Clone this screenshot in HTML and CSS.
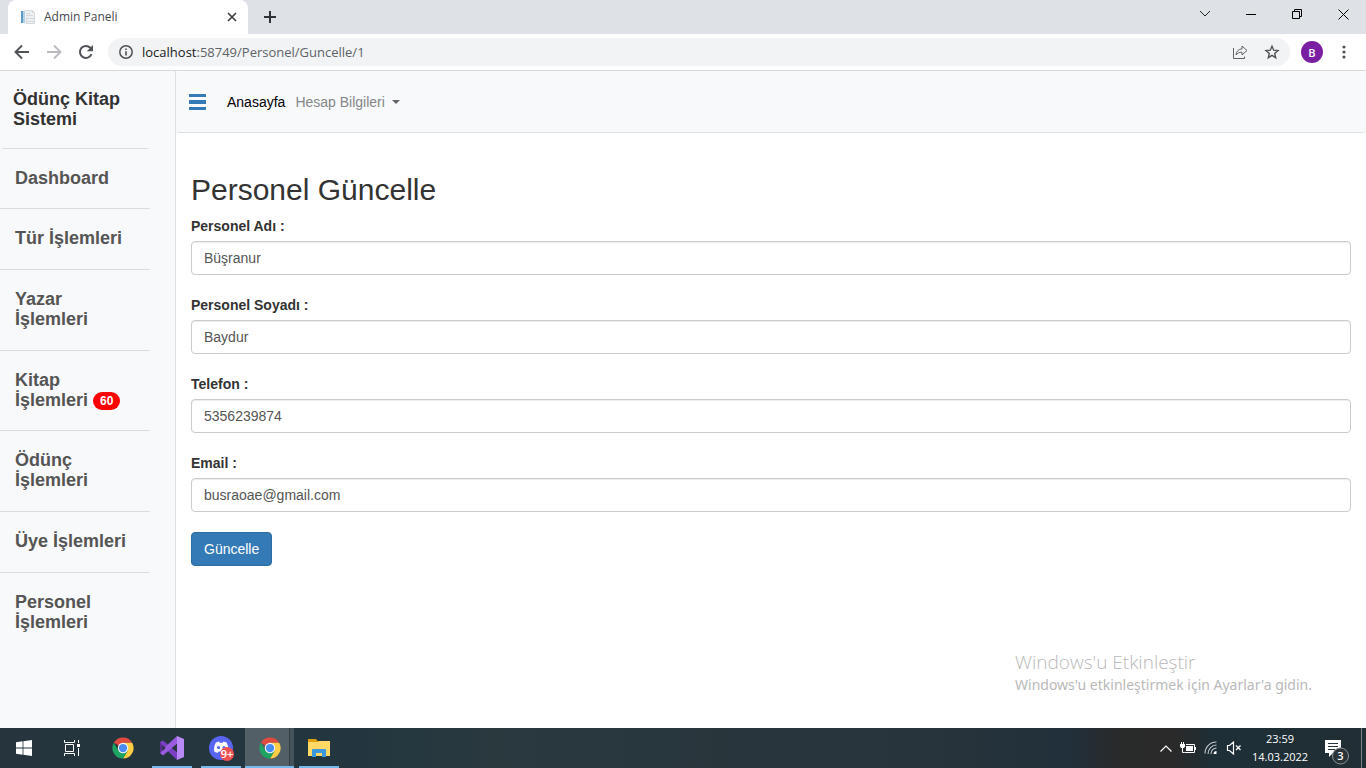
FILE: index.html
```html
<!DOCTYPE html>
<html lang="tr">
<head>
<meta charset="utf-8">
<title>Admin Paneli</title>
<link rel="stylesheet" href="styles.css">
</head>
<body>
<svg class="defs" aria-hidden="true">
  <symbol id="chrome" viewBox="0 0 48 48">
    <path fill="#e04a3f" d="M24 24 4 12.500A23 23 0 0 1 44 12.500H24z"/>
    <path fill="#ffcd46" d="M24 12.500H44A23 23 0 0 1 24 47L34 30z"/>
    <path fill="#1da462" d="M4 12.500 14 30 34 30 24 47A23 23 0 0 1 4 12.500z"/>
    <circle cx="24" cy="24" r="11.500" fill="#f3f6f8"/>
    <circle cx="24" cy="24" r="9" fill="#4a8af4"/>
  </symbol>
</svg>

<header class="browser">
  <div class="tabstrip">
    <div class="tab">
      <svg class="favicon" width="16" height="16" viewBox="0 0 16 16"><path fill="#eef1f3" d="M4 1h8l3 3v11H4z"/><path fill="#d5d9dc" d="M12 1v3h3zM6 4h4v1H6zM6 6h7v1H6zM7 9h7v1H7zM7 12h7v1H7z"/><path fill="#5b9bc9" d="M1 2h2v12H1z"/><path fill="#b6d3e6" d="M3 2h2v12H3z"/><path fill="none" stroke="#d5d9dc" d="M5 1.500h7l2.500 3v10H6.500v-6"/></svg>
      <span class="tab-title">Admin Paneli</span>
      <button class="tab-close" aria-label="Sekmeyi kapat"><svg width="10" height="10" viewBox="0 0 10 10"><path d="M1 1l8 8M9 1L1 9" stroke="#3c4043" stroke-width="1.700"/></svg></button>
    </div>
    <button class="new-tab" aria-label="Yeni sekme"><svg width="12" height="12" viewBox="0 0 12 12"><path d="M6 0v12M0 6h12" stroke="#303337" stroke-width="2"/></svg></button>
    <div class="window-controls">
      <button aria-label="Sekme ara"><svg width="12" height="8" viewBox="0 0 12 8"><path d="M1 1l5 5 5-5" fill="none" stroke="#222"/></svg></button>
      <button aria-label="Küçült"><svg width="10" height="10" viewBox="0 0 10 10"><path d="M0 5.500h10" stroke="#000"/></svg></button>
      <button aria-label="Önceki boyut"><svg width="10" height="10" viewBox="0 0 10 10"><path d="M.5 2.500h7v7h-7zM2.500 2.500v-2h7v7h-2" fill="none" stroke="#000"/></svg></button>
      <button aria-label="Kapat"><svg width="11" height="11" viewBox="0 0 11 11"><path d="M.5.5l10 10M10.500.5l-10 10" stroke="#000"/></svg></button>
    </div>
  </div>
  <div class="toolbar">
    <button class="tool" aria-label="Geri"><svg width="16" height="16" viewBox="0 0 16 16"><path d="M15 8H2M8 1.500L1.500 8 8 14.500" fill="none" stroke="#505357" stroke-width="1.900"/></svg></button>
    <button class="tool" aria-label="İleri"><svg width="16" height="16" viewBox="0 0 16 16"><path d="M1 8h13M8 1.500L14.500 8 8 14.500" fill="none" stroke="#b9bbbe" stroke-width="1.900"/></svg></button>
    <button class="tool" aria-label="Yenile"><svg width="16" height="16" viewBox="0 0 16 16"><path d="M13.500 10.200A6 6 0 1 1 12.300 3.800L14 5.500" fill="none" stroke="#505357" stroke-width="2"/><path d="M15 1v6.200H8.800z" fill="#505357"/></svg></button>
    <div class="omnibox">
      <svg width="14" height="14" viewBox="0 0 14 14"><circle cx="7" cy="7" r="6.200" fill="none" stroke="#4f5256" stroke-width="1.500"/><path d="M6.200 6.200h1.600v4.300H6.200zM6.200 3.400h1.600V5H6.200z" fill="#4f5256"/></svg>
      <span class="url"><b>localhost</b>:58749/Personel/Guncelle/1</span>
      <button class="tool" aria-label="Paylaş"><svg width="16" height="16" viewBox="0 0 16 16"><path d="M1.500 4v10.500h11v-2" fill="none" stroke="#606367"/><path d="M4 11C4.200 7.500 6.500 5 10 4.900V2L15 6.500 10 11V8.200C7.200 8.200 5.500 9 4 11z" fill="none" stroke="#606367"/></svg></button>
      <button class="tool" aria-label="Yer işareti"><svg width="16" height="16" viewBox="0 0 16 16"><path d="M8 2.200l1.700 4 4.300.3-3.300 2.900 1 4.300L8 11.400l-3.700 2.300 1-4.300L2 6.500l4.300-.3z" fill="none" stroke="#505357" stroke-width="1.400"/></svg></button>
    </div>
    <button class="avatar">B</button>
    <button class="tool menu" aria-label="Menü"><svg width="4" height="14" viewBox="0 0 4 14"><g fill="#505357"><circle cx="2" cy="2" r="1.600"/><circle cx="2" cy="7" r="1.600"/><circle cx="2" cy="12" r="1.600"/></g></svg></button>
  </div>
</header>

<div class="page">
  <aside class="sidebar">
    <h4 class="brand">Ödünç Kitap Sistemi</h4>
    <nav class="side-list">
      <a href="#">Dashboard</a>
      <a href="#">Tür İşlemleri</a>
      <a href="#">Yazar İşlemleri</a>
      <a href="#">Kitap İşlemleri <span class="badge">60</span></a>
      <a href="#">Ödünç İşlemleri</a>
      <a href="#">Üye İşlemleri</a>
      <a href="#">Personel İşlemleri</a>
    </nav>
  </aside>
  <main class="main">
    <nav class="navbar">
      <button class="toggle" aria-label="Menüyü aç"><svg width="17" height="16" viewBox="0 0 17 16"><path d="M0 0h17v3H0zM0 6h17v4H0zM0 13h17v3H0z" fill="#337ab7"/></svg></button>
      <a class="current" href="#">Anasayfa</a>
      <a class="dropdown" href="#">Hesap Bilgileri <span class="caret"></span></a>
    </nav>
    <form class="content">
      <h2>Personel Güncelle</h2>
      <div class="field"><label for="ad">Personel Adı :</label><input id="ad" type="text" value="Büşranur"></div>
      <div class="field"><label for="soyad">Personel Soyadı :</label><input id="soyad" type="text" value="Baydur"></div>
      <div class="field"><label for="tel">Telefon :</label><input id="tel" type="text" value="5356239874"></div>
      <div class="field"><label for="email">Email :</label><input id="email" type="text" value="busraoae@gmail.com"></div>
      <button class="btn" type="button">Güncelle</button>
    </form>
  </main>
  <div class="activation"><strong>Windows'u Etkinleştir</strong><span>Windows'u etkinleştirmek için Ayarlar'a gidin.</span></div>
</div>

<footer class="taskbar">
  <div class="system">
    <button aria-label="Başlat"><svg width="16" height="16" viewBox="0 0 16 16"><path fill="#fff" d="M0 2.200L6.600 1.300V7.600H0zM7.400 1.200L16 0v7.600H7.400zM0 8.400h6.600v6.300L0 13.800zM7.400 8.400H16V16l-8.600-1.200z"/></svg></button>
    <button aria-label="Görev görünümü"><svg width="16" height="16" viewBox="0 0 16 16"><path d="M.5 0v2.500h10V0M.5 16v-2.500h10V16M1.500 4.500h8v7h-8zM14.500 0v3M14.500 8v8" fill="none" stroke="#fff"/><path fill="#fff" d="M13 4h3v3h-3z"/></svg></button>
  </div>
  <div class="apps">
    <button aria-label="Chrome"><svg width="22" height="22"><use href="#chrome"/></svg></button>
    <button class="open" aria-label="Visual Studio"><svg width="24" height="24" viewBox="0 0 24 24"><path fill="#7b3fc4" d="M0 6l3-1.500L18 17l-1 7L3 10.500v4L0 17z"/><path fill="#9a5be0" d="M0 17l3 2.500L18 7l-1-7L3 13z"/><path fill="#b98af5" d="M17 0l7 3v18l-7 3z"/><path fill="#5c2d91" d="M0 6l3 4.500v3L0 17z"/><path fill="#26353c" d="M17 8v8l-5-4zM2.500 9v6l3-3z"/></svg></button>
    <button class="open" aria-label="Discord"><svg width="24" height="26" viewBox="0 0 24 26"><circle cx="12" cy="13" r="12" fill="#5865f2"/><path fill="#fff" d="M5 16c0-4 .8-7 2-8.500l3-1 .7 1.200h3l.8-1.200 3 1c1.300 2 2 5 2 8.500-1 1-2 1.500-3.500 2l-1-1.500H9.500L8.500 18C7 17.500 6 17 5 16z"/><circle cx="9.500" cy="12.500" r="1.600" fill="#5865f2"/><circle cx="15" cy="12.500" r="1.600" fill="#5865f2"/></svg><svg class="discord-badge" width="14" height="14" viewBox="0 0 14 14"><circle cx="7" cy="7" r="7" fill="#ef5052"/><text x="7" y="11" text-anchor="middle" class="count">9+</text></svg></button>
    <button class="open active" aria-label="Chrome, Admin Paneli"><svg width="22" height="22"><use href="#chrome"/></svg></button>
    <button class="open" aria-label="Dosya Gezgini"><svg width="22" height="18" viewBox="0 0 22 18"><path fill="#e0a010" d="M0 0h8l1.500 2H22v3H0z"/><path fill="#ffd866" d="M0 3h10l1-1h11v15H0z"/><path fill="#3c97dd" d="M4 18v-7q0-1 1-1h12q1 0 1 1v7h-4v-4H8v4z"/></svg></button>
  </div>
  <div class="tray">
    <svg width="12" height="7" viewBox="0 0 12 7"><path d="M.5 6.500L6 1l5.500 5.500" fill="none" stroke="#fff" stroke-width="1.200"/></svg>
    <svg width="16" height="12" viewBox="0 0 16 12"><path d="M6 2.500h8.500v8h-10M1.500 0v2M3.500 0v2M2.500 5v5.500h2" fill="none" stroke="#fff"/><path fill="#fff" d="M0 2h5v2.500L4 6H1L0 4.500zM6 4h7v5H6zM15 5h1v3h-1z"/></svg>
    <svg width="14" height="14" viewBox="0 0 14 14"><path d="M1 12.500C1 6 6 1 12.500 1M4 13C4 8 8 4 12.500 4M7 13c0-3.500 2.500-6 5.500-6" fill="none" stroke="#c2c9cc" stroke-width="1.100"/><path d="M9.500 13c0-2 1.500-3 3-3v3z" fill="#fff"/></svg>
    <svg width="16" height="14" viewBox="0 0 16 14"><path d="M1.500 4.500h2l4-3.500v12l-4-3.500h-2zM10 4.500l4.500 4.500M14.500 4.500L10 9" fill="none" stroke="#fff" stroke-width="1.200"/></svg>
  </div>
  <div class="clock"><time>23:59</time><time>14.03.2022</time></div>
  <button class="notices" aria-label="Bildirimler"><svg width="26" height="26" viewBox="0 0 26 26"><path fill="#fff" d="M0 1h16v13H8l-4 4v-4H0z"/><path d="M3 4.500h10M3 7.500h10M3 10.500h7" stroke="#26343b"/><circle cx="15.500" cy="17" r="8" fill="#2b3337" stroke="#899196"/><text x="15.500" y="21" text-anchor="middle" class="count">3</text></svg></button>
</footer>
</body>
</html>
```

FILE: styles.css
```css
* { box-sizing: border-box; }

body {
  margin: 0;
  min-height: 100vh;
  display: flex;
  flex-direction: column;
  font: 14px/20px "Liberation Sans", Arial, sans-serif;
  color: #333;
  background: #fff;
}

button {
  display: flex;
  align-items: center;
  justify-content: center;
  padding: 0;
  border: 0;
  background: none;
}

a { text-decoration: none; }
.defs { display: none; }
svg { display: block; flex: none; }

/* Browser frame */
.browser {
  font-family: "Open Sans", "Noto Sans", sans-serif;
  border-bottom: 1px solid #d6d9dc;
}

.tabstrip {
  display: flex;
  height: 34px;
  padding-left: 8px;
  background: #dee1e6;
}

.tab {
  display: flex;
  align-items: center;
  width: 240px;
  padding: 0 11px 0 12px;
  gap: 8px;
  border-radius: 8px 8px 0 0;
  background: #fff;
  color: #45494d;
  font-size: 12px;
}

.tab-title { flex: 1; }
.new-tab { width: 44px; }

.window-controls {
  display: flex;
  margin-left: auto;
  padding-bottom: 6px;
}

.window-controls button { width: 46px; }

.toolbar {
  display: flex;
  align-items: center;
  height: 36px;
  padding: 0 6px;
}

.tool {
  width: 32px;
  height: 28px;
}

.omnibox {
  flex: 1;
  display: flex;
  align-items: center;
  height: 28px;
  margin: 0 11px 0 6px;
  padding: 0 2px 0 11px;
  border-radius: 14px;
  background: #f1f3f4;
}

.url {
  flex: 1;
  padding-left: 9px;
  font-size: 13px;
  color: #5f6368;
}

.url b {
  font-weight: 400;
  color: #202124;
}

.avatar {
  width: 22px;
  height: 22px;
  border-radius: 50%;
  background: #7b1fa2;
  color: #fff;
  font: 600 11px "Open Sans", sans-serif;
}

.menu {
  width: 32px;
  margin-left: 5px;
}

/* Application */
.page {
  position: relative;
  flex: 1;
  display: flex;
}

.sidebar {
  width: 176px;
  border-right: 1px solid #dee2e6;
  background: #f8f9fb;
}

.brand {
  margin: 0;
  padding: 19px 24px 18px 13px;
  font-size: 18px;
  font-weight: 700;
  line-height: 1.1;
}

.side-list {
  width: 150px;
  border-radius: 4px;
  overflow: hidden;
}

.side-list a {
  display: block;
  padding: 20px 20px 20px 15px;
  border-top: 1px solid #dadcdf;
  color: #555;
  font-size: 18px;
  font-weight: 700;
  line-height: 1.1;
}

.badge {
  display: inline-block;
  padding: 3px 7px;
  border-radius: 10px;
  background: #f00;
  color: #fff;
  font-size: 12px;
  line-height: 12px;
  vertical-align: middle;
}

.main { flex: 1; }

.navbar {
  display: flex;
  align-items: center;
  height: 62px;
  padding-left: 13px;
  border-bottom: 1px solid #dee2e6;
  border-radius: 4px;
  background: #f8f9fb;
}

.toggle { margin-right: 21px; }
.current { color: #000; }

.dropdown {
  display: flex;
  align-items: center;
  gap: 7px;
  margin-left: 10px;
  color: #868788;
}

.caret {
  border: 4px solid transparent;
  border-top-color: #666;
  border-bottom: 0;
}

.content { padding: 40px 15px 20px; }

.content h2 {
  margin: 0 0 10px;
  font-size: 30px;
  font-weight: 400;
  line-height: 33px;
}

.field { margin-bottom: 20px; }

.field label {
  display: block;
  margin-bottom: 5px;
  font-weight: 700;
}

.field input {
  display: block;
  width: 100%;
  height: 34px;
  padding: 6px 12px;
  border: 1px solid #ccc;
  border-radius: 4px;
  box-shadow: inset 0 1px 1px rgba(0, 0, 0, 0.075);
  color: #555;
  font: inherit;
}

.btn {
  padding: 6px 12px;
  border: 1px solid #2e6da4;
  border-radius: 4px;
  background: #337ab7;
  color: #fff;
  font: inherit;
}

.activation {
  position: absolute;
  right: 54px;
  bottom: 33px;
  display: flex;
  flex-direction: column;
  color: #b9b9b9;
  font-family: "Noto Sans", "Open Sans", sans-serif;
  font-size: 14px;
}

.activation strong {
  font-family: "Open Sans", "Noto Sans", sans-serif;
  font-size: 19px;
  font-weight: 300;
  line-height: 25px;
}

/* Taskbar */
.taskbar {
  display: flex;
  height: 40px;
  padding-right: 4px;
  background: linear-gradient(90deg, #26353d 0%, #23363f 26%, #29393e 36%, #28343b 68%, #21303a 78%, #292a2a 82%, #292a29 86%, #1e2f37 89%, #212e34 100%);
}

.system { display: flex; padding-right: 2px; }
.system button { width: 48px; }
.apps { display: flex; }

.apps button {
  position: relative;
  width: 49px;
}

.discord-badge {
  position: absolute;
  right: 11px;
  bottom: 7px;
}

.open::after {
  content: "";
  position: absolute;
  left: 5px;
  right: 4px;
  bottom: 0;
  height: 2px;
  background: #76b9ed;
}

.apps .active {
  background: linear-gradient(90deg, #535f66 44px, #333f46 44px, #333f46 45px, #465259 45px);
}

.active::after { left: 0; right: 0; }

.count {
  fill: #fff;
  font: 600 11px "Open Sans", sans-serif;
}

.tray {
  display: flex;
  align-items: center;
  gap: 8px;
  margin-left: auto;
  padding-right: 4px;
}

.clock {
  display: flex;
  flex-direction: column;
  justify-content: center;
  width: 68px;
  color: #fff;
  font: 11px/18px "Open Sans", "Noto Sans", sans-serif;
  text-align: center;
}

.notices {
  width: 48px;
  padding-top: 8px;
  border-right: 1px solid #7b858a;
}
```
